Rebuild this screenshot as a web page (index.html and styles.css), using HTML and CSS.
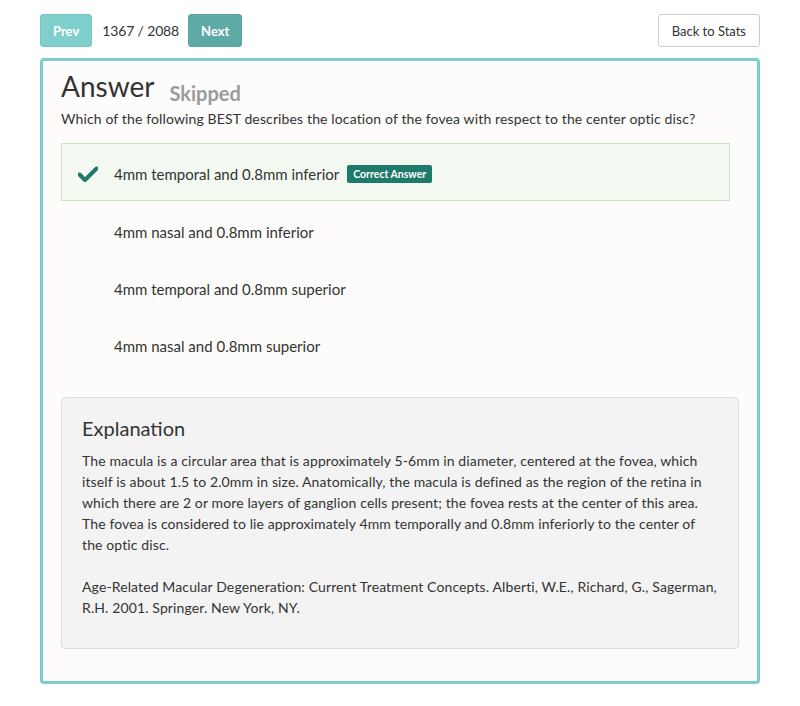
FILE: index.html
```html
<!DOCTYPE html>
<html>
<head>
<meta charset="utf-8">
<link rel="stylesheet" href="styles.css">
</head>
<body>
<div class="page">
  <div class="topbar">
    <div class="nav">
      <button class="btn btn-prev">Prev</button>
      <span class="counter">1367 / 2088</span>
      <button class="btn btn-next">Next</button>
    </div>
    <button class="btn btn-back">Back to Stats</button>
  </div>
  <div class="card">
    <div class="title-row">
      <h1 class="title">Answer</h1>
      <span class="status">Skipped</span>
    </div>
    <p class="question">Which of the following BEST describes the location of the fovea with respect to the center optic disc?</p>
    <ul class="options">
      <li class="option correct">
        <svg class="check" viewBox="0 0 20 16"><path d="M1.5 8.5 L7 14 L18.5 2.5" fill="none" stroke="currentColor" stroke-width="4" stroke-linecap="round" stroke-linejoin="round"/></svg>
        <span class="opt-text">4mm temporal and 0.8mm inferior</span>
        <span class="badge">Correct Answer</span>
      </li>
      <li class="option">
        <svg class="check faint" viewBox="0 0 20 16"><path d="M1.5 8.5 L7 14 L18.5 2.5" fill="none" stroke="currentColor" stroke-width="4" stroke-linecap="round" stroke-linejoin="round"/></svg>
        <span class="opt-text">4mm nasal and 0.8mm inferior</span>
      </li>
      <li class="option">
        <svg class="check faint" viewBox="0 0 20 16"><path d="M1.5 8.5 L7 14 L18.5 2.5" fill="none" stroke="currentColor" stroke-width="4" stroke-linecap="round" stroke-linejoin="round"/></svg>
        <span class="opt-text">4mm temporal and 0.8mm superior</span>
      </li>
      <li class="option">
        <svg class="check faint" viewBox="0 0 20 16"><path d="M1.5 8.5 L7 14 L18.5 2.5" fill="none" stroke="currentColor" stroke-width="4" stroke-linecap="round" stroke-linejoin="round"/></svg>
        <span class="opt-text">4mm nasal and 0.8mm superior</span>
      </li>
    </ul>
    <div class="explanation">
      <h2 class="exp-title">Explanation</h2>
      <p class="exp-text">The macula is a circular area that is approximately 5-6mm in diameter, centered at the fovea, which itself is about 1.5 to 2.0mm in size. Anatomically, the macula is defined as the region of the retina in which there are 2 or more layers of ganglion cells present; the fovea rests at the center of this area.<br>The fovea is considered to lie approximately 4mm temporally and 0.8mm inferiorly to the center of the optic disc.</p>
      <p class="exp-text">Age-Related Macular Degeneration: Current Treatment Concepts. Alberti, W.E., Richard, G., Sagerman, R.H. 2001. Springer. New York, NY.</p>
    </div>
  </div>
</div>
</body>
</html>
```
FILE: styles.css
```css
* { box-sizing: border-box; }
html, body { margin: 0; padding: 0; background: #fff; }
body {
  font-family: Lato, "Open Sans", sans-serif;
  color: #333;
  font-size: 14px;
}
.page {
  width: 720px;
  margin: 0 auto;
  padding-top: 14px;
}
.topbar {
  display: flex;
  justify-content: space-between;
  align-items: center;
  height: 33px;
}
.nav {
  display: flex;
  align-items: center;
}
.btn {
  font-family: inherit;
  height: 33px;
  border-radius: 3px;
  border: 1px solid transparent;
  cursor: pointer;
  padding: 0 12px;
}
.btn-prev {
  background: #7fcfcd;
  border-color: #76c6c4;
  color: #fff;
  font-weight: 700;
  font-size: 13px;
}
.btn-next {
  background: #5eaaa7;
  border-color: #59a4a1;
  color: #fff;
  font-weight: 700;
  font-size: 13px;
}
.counter {
  font-size: 14px;
  color: #333;
  margin: 0 9px 0 10px;
  letter-spacing: -0.15px;
}
.btn-back {
  background: #fff;
  border-color: #ccc;
  color: #333;
  font-size: 13px;
  padding: 0 13px;
}
.card {
  margin-top: 11px;
  border: 3px solid #7ecdcb;
  border-radius: 4px;
  background: #fdfcfa;
  padding: 8px 18px 32px;
}
.title-row {
  display: flex;
  align-items: baseline;
}
.title {
  font-size: 28px;
  font-weight: 400;
  margin: 0;
  line-height: 34px;
  color: #333;
}
.status {
  font-size: 20px;
  font-weight: 700;
  color: #9a9a9a;
  margin-left: 15px;
  position: relative;
  top: 4px;
}
.question {
  margin: 6px 0 14px;
  font-size: 14px;
  line-height: 20px;
  letter-spacing: 0.13px;
}
.options {
  list-style: none;
  margin: 0 9px 0 0;
  padding: 0;
}
.option {
  display: flex;
  align-items: center;
  height: 57px;
  border: 1px solid transparent;
  padding: 4px 16px 0;
  font-size: 15px;
}
.option.correct {
  background: #f3f9f1;
  border-color: #c9e3c5;
  height: 58px;
}
.check {
  width: 20px;
  height: 16px;
  color: #1f7a6b;
  margin-right: 16px;
  flex: none;
}
.check.faint { color: #fbfaf8; }
.badge {
  background: #1e7a6a;
  color: #fff;
  font-size: 10.5px;
  font-weight: 700;
  padding: 3px 6px;
  border-radius: 2px;
  margin-left: 8px;
  line-height: 12px;
}
.explanation {
  margin-top: 25px;
  background: #f3f3f3;
  border: 1px solid #dcdcdc;
  border-radius: 4px;
  padding: 16px 20px 30px;
}
.exp-title {
  font-size: 20px;
  font-weight: 400;
  margin: 0 0 8px;
  line-height: 28px;
  color: #333;
}
.exp-text {
  margin: 0 0 21px;
  font-size: 14px;
  line-height: 21px;
  letter-spacing: 0.12px;
}
.exp-text:last-child { margin-bottom: 0; }
```
